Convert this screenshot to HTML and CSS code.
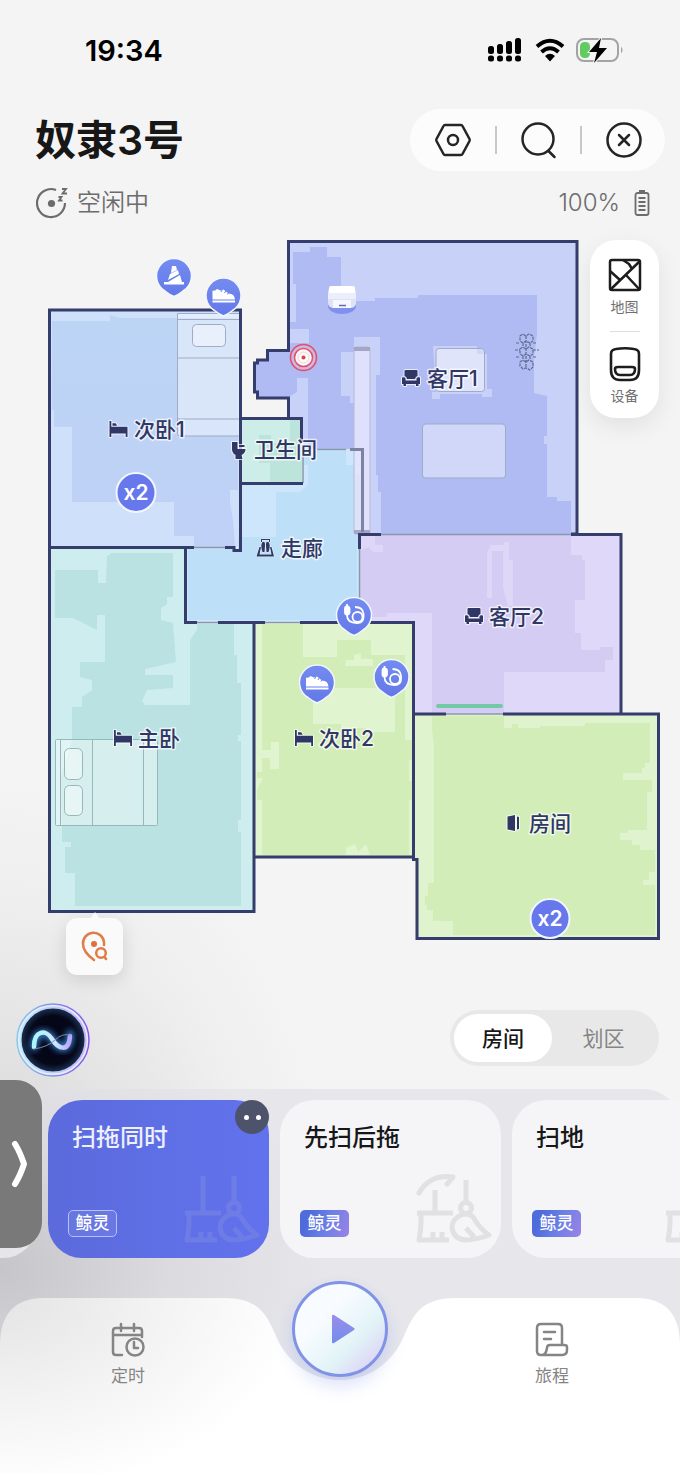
FILE: index.html
```html
<!DOCTYPE html>
<html lang="zh-CN">
<head>
<meta charset="utf-8">
<meta name="viewport" content="width=device-width, initial-scale=1">
<title>奴隶3号</title>
<link rel="stylesheet" href="styles.css">
</head>
<body>
<div class="app">
  <div class="statusbar">
    <span class="clock">19:34</span>
    <div class="signals">
      <svg width="36" height="26" viewBox="0 0 36 26" aria-hidden="true">
        <g fill="#000"><rect x="1" y="9" width="6" height="8" rx="2.5"/><rect x="10" y="7" width="6" height="10" rx="2.5"/><rect x="19" y="4" width="6" height="13" rx="2.5"/><rect x="28" y="1" width="6" height="16" rx="2.5"/><rect x="1" y="18.500" width="6" height="6" rx="2.500"/><rect x="10" y="18.500" width="6" height="6" rx="2.500"/><rect x="19" y="18.500" width="6" height="6" rx="2.500"/><rect x="28" y="18.500" width="6" height="6" rx="2.500"/></g>
      </svg>
      <svg width="30" height="24" viewBox="0 0 30 24" aria-hidden="true">
        <g fill="none" stroke="#000" stroke-width="4"><path d="M2 8.500Q15-3 28 8.500"/><path d="M6.500 14Q15 6.500 23.500 14"/></g><path d="M10 18q5-4.500 10 0l-5 5.500z"/>
      </svg>
      <svg width="48" height="26" viewBox="0 0 48 26" aria-hidden="true">
        <rect x="1" y="2" width="41" height="22" rx="7" fill="none" stroke="#a3a3a3" stroke-width="2"/>
        <rect x="4" y="5" width="10" height="16" rx="4.500" fill="#61cb62"/>
        <path d="M45 9.500q3 3.500 0 7z" fill="#a3a3a3"/>
        <path d="M25 1L13 15h8l-3 11 13-15h-8z" stroke="#f4f4f4" stroke-width="2" paint-order="stroke"/>
      </svg>
    </div>
  </div>

  <header class="header">
    <h1 class="title">奴隶3号</h1>
    <div class="capsule">
      <button class="icon-btn" aria-label="设置"><svg width="38" height="38" viewBox="0 0 38 38"><path d="M11 4h16q1 0 1.500 1l7 13q.5 1 0 2l-7 13q-.5 1-1.500 1H11q-1 0-1.500-1l-7-13q-.5-1 0-2l7-13q.5-1 1.500-1z"/><circle cx="19" cy="19" r="5"/></svg></button>
      <span class="bar"></span>
      <button class="icon-btn" aria-label="搜索"><svg width="38" height="38" viewBox="0 0 38 38"><circle cx="18" cy="18" r="15.500"/><path d="M28.500 30l6 6"/></svg></button>
      <span class="bar"></span>
      <button class="icon-btn" aria-label="关闭"><svg width="38" height="38" viewBox="0 0 38 38"><circle cx="19" cy="19" r="16.500"/><path d="M14 14l10 10M24 14l-10 10"/></svg></button>
    </div>
  </header>

  <div class="state">
    <span class="state-item">
      <svg width="32" height="32" viewBox="0 0 32 32" fill="none" stroke="#6c6c6c" stroke-width="2.200" aria-hidden="true"><path d="M20 3A14 14 0 1 0 29 16"/><circle cx="15.500" cy="16.500" r="3.600" fill="#6c6c6c" stroke="none"/><path d="M26 2h4l-3.500 4.500H31M22.500 10h3l-2.500 3.500h3.500" stroke-width="1.800"/></svg>
      空闲中
    </span>
    <span class="state-item battery">
      100%
      <svg width="16" height="28" viewBox="0 0 16 28" fill="none" stroke="#6c6c6c" stroke-width="1.800" aria-hidden="true"><rect x="1.500" y="4" width="13" height="22" rx="2"/><path d="M5 2h6M4.500 9h7M4.500 13h7M4.500 17h7M4.500 21h7"/></svg>
    </span>
  </div>

  <main class="map">
    <svg class="plan" viewBox="0 230 680 750" role="img" aria-label="房间地图">
      <defs>
        <linearGradient id="pinFill" x1="0" y1="0" x2="0" y2="1"><stop offset="0" stop-color="#748cf0"/><stop offset="1" stop-color="#6378e8"/></linearGradient>
        <linearGradient id="bedroomFill" x1="0" y1="0" x2="0" y2="1"><stop offset="0" stop-color="#bcd5f5"/><stop offset="1" stop-color="#bfd0f6"/></linearGradient>
        <path id="pin" d="M0 20.500Q-4 19-9 15A17.500 17.500 0 1 1 9 15Q4 19 0 20.500z"/>
        <path id="bed" d="M0 0h1.800v5.800H18V16h-1.800v-3.500H1.800V16H0zM3 2.200h3.200l1.500 2.600H3z"/>
        <path id="sofa" d="M3.500 0h11q1 0 1 1v5q-2 .5-2.500 3H5Q4.500 6.500 2.500 6V1q0-1 1-1zM0 7.500q3-1 3.500 1V10.500h11V8.500q.5-2 3.500-1V14h-1.500v2H14v-2H4v2H1.500v-2H0z"/>
        <g id="shoe"><path fill="#fff" d="M-11-5q2.500 1 4.500-1.500L-3-5l3-1 5 4q6 0 6.500 6H-11zM-11 5h22.500v2H-11z"/><path d="M-1-6l-1.500 2.500M2.500-5l-1.500 2.500M5.500-3.500l-1.500 2.500" stroke="#6d85ee" stroke-width="1"/></g>
        <g id="cable" fill="none" stroke="#fff" stroke-width="1.800"><rect x="-9" y="-8.500" width="4.500" height="8" rx="2" fill="#fff"/><path d="M-7-11v3M-7 0Q-7 8 3 8 9.500 8 9.500 2V-1Q9-8 1-8"/><circle cx="3.500" cy="2" r="5"/></g>
      </defs>

      <g class="floor">
        <path fill="#cfe0fb" d="M50 310H240V547H50z"/>
        <path fill="url(#bedroomFill)" d="M52 321H110V315L120 318H238V490H230V502L233 520 235 547H194V536H174V502H72V427H54V410H52z"/>
        <path fill="#c8d1f7" d="M288 242H577V534H363V449H303V418H288V398H257V392H254V363H257V360H267V350H288z"/>
        <path fill="#b0bbf4" d="M293 252H310V247H327V257H341V301H375V298H418V295H537V335L534 357V393L547 396V436H544V444H547V497H557V501H571V534H381V492H378V475H376V375H380V337H354V352H341V396H350V403H354V449H308V378H297V392L289 397H257V392H254V363H257V360H267V350H289V343H309V329H289V322H296V284H293z"/>
        <path fill="#cdeee8" d="M241 419H302V483H241z"/>
        <path fill="#bce4db" d="M290 419h12v64h-32v-20h-11v-28h12v8h19z"/>
        <path fill="#cee6fc" d="M241 483H303V449H363V534H359V622H186V548H241z"/>
        <path fill="#bedff8" d="M276 492H300L308 484V465H303V451H346V465H354V475H361V534L357 547V620H188V549H238V537H276z"/>
        <path fill="#dfd8f8" d="M359 534H621V714H414V622H359z"/>
        <path fill="#d4ccf2" d="M360 535H571V555H582V560H585V600H575V633H581V650H600V647H613V660H605V672H504V713H432V613H387V617H360z"/>
        <path fill="#ded7f7" d="M487 553l4-8h13v-3h5v18h4v46h-5l-5-18v-37h-11v47h-5zM361 536h14v9h8v7h-10l-4-5-8 3z"/>
        <path fill="#ceedef" d="M50 548H186V622H254V911H50z"/>
        <path fill="#bae2e2" d="M107 555H110V553H173V597H167V604L161 608V620L173 623 176 662 145 669V675H173V688L147 690 142 701 145 705H190V640L197 630V624H234V655H237V683H241V735H238V741H241V820H238V832H241V906H75V873H65V847H71V842H62V826L60 780 72 740V707H82V697L92 690V680L80 677V662H105V615H97V630L73 618H55V570H98V583H106z"/>
        <path fill="#e0f4cf" d="M254 622H414V857H254z"/>
        <path fill="#d2edb8" d="M262 624H303V657H337V640H371V655H405V740H412V760H409V781H412V800H409V855H262V800H257V790L263 778H257V772H262z"/>
        <path fill="#dff4cf" d="M313 688H395V732H366V728H341V724H313zM271 742h8v27h-9v-11h-8v-8h9zM346 660h8v-5l7-2v6h12v7h-28zM346 855v-7l9-4 3 8 8-8 4 11z"/>
        <path fill="#dff3cf" d="M414 714H658V939H417V859H414z"/>
        <path fill="#d2edb8" d="M432 716H504V728H512V724H518V728H540V726H585V723H650V763H645V768H642V773H623V780H652V792H647V830H628V833H620V840H632V845H640V850H655V872H649V880H643V885H655V935H453V921H433V910H427V905H425V896H428V883H434V747L432 730z"/>
      </g>

      <g class="furniture">
        <path d="M177.500 313.500H240V436H180q-2.500 0-2.500-2.500z"/><path d="M178 319.500H240M178 358H240M178 419H240"/><rect x="192.500" y="324.500" width="33" height="22" rx="4"/>
        <g class="teal"><rect x="55.500" y="739.500" width="102" height="86" rx="1"/><path d="M60.500 740v85M92.500 740v85M143.500 740v85"/><rect x="64.500" y="748.500" width="18" height="31" rx="5"/><rect x="64.500" y="785.500" width="18" height="30" rx="5"/></g>
        <path class="halo" d="M433 346h44v8h10v35h5v8h-10v-3h-42v5h-8v-7h4z"/>
        <rect x="436" y="348.500" width="48.500" height="43" rx="3"/><rect x="422.500" y="424" width="83" height="54" rx="3"/>
      </g>

      <g class="door"><path d="M194 547.500H225M317 449.500H346M303 449V483M197 622.500H218M265 622.500H300M446 714H503M381 534.500H571M359.500 549V620"/></g>
      <g class="cabinet"><rect x="354" y="347" width="16" height="187" rx="2"/><path d="M354 347h16v4h-16z"/><path d="M354 530h16v4h-16z"/></g>
      <g class="wall">
        <path d="M194 547.500H49.500V310H240.500V550.500H234V547.500H225"/>
        <path d="M288.500 418V398H257.500V392H254.500V363H257.500V360H267.500V350.500H288.500V241.500H577V534H571"/>
        <path d="M240 418.500H301.500V442M240 483.500H303"/>
        <path class="soft" d="M350 449.500H362.500V532"/>
        <path d="M381 534.500H359.500V549M571 534.500H621V714"/>
        <path d="M185.500 547.500V622.500H197M218 622.500H265M300 622.500H413.500V859.500H417V938.500H658.500V714H503M446 714H415M254 622.500V911.500H49.500V547M254 857H414"/>
      </g>
      <path d="M438 706H501" stroke="#73c9a6" stroke-width="4" stroke-linecap="round"/>

      <g fill="none" stroke="#626a8c" stroke-width="1.200" stroke-dasharray="3 1">
        <path d="M520 336l3-2 3 2 3-2 4 2v5l-3 2-4-2-3 2-3-2zM520 349l3-2 3 2 3-2 4 2v5l-3 2-4-2-3 2-3-2zM520 362l3-2 3 2 3-2 4 2v5l-3 3-4-2-3 1-3-3zM523 343v4M530 343v4M523 356v4M530 356v4M526 336v32M516 343h4M533 343h4M515 350h5M533 350h6M516 357h4M533 357h3"/>
      </g>

      <g class="robot"><ellipse cx="342" cy="306" rx="14" ry="8" fill="#7f91ed"/><rect x="328" y="287" width="28" height="21" rx="5" fill="#dfe1f5"/><path d="M331 286h22q2 0 2 2v5h-26v-5q0-2 2-2z" fill="#fff"/><path d="M328 293h28v6h-28z" fill="#eceefd"/><path d="M333 300h18v8h-18z" fill="#f7f8ff"/><path d="M339 305.500h7" stroke="#5c6db2" stroke-width="1.500"/></g>
      <g><circle cx="303.500" cy="357.500" r="13" fill="#dcb3dc" fill-opacity=".75" stroke="#df526b" stroke-width="1.600"/><circle cx="303.500" cy="357.500" r="9" fill="#fffaf9" stroke="#df526b" stroke-width="1.500"/><circle cx="303.500" cy="357.500" r="5.500" fill="none" stroke="#e9d5cc"/><circle cx="303.500" cy="357.500" r="2" fill="#dc3e59"/></g>

      <g class="tags">
        <use href="#bed" x="109.500" y="421"/><text x="134" y="437">次卧1</text>
        <path d="M232 442h5.500v7h8q0 4-4 6l1 4h-7v-4q-3.500-2-3.500-6zM239 445h5.500v2H239z"/><text x="254" y="457">卫生间</text>
        <g class="fine"><path d="M259.500 547h1.500l-1.500 7.500h12l-1.500-7.500h1.500l2.500 9.500h-17.500zM261 542v-3h9v3h-1v-2h-7v2z"/><path d="M262.500 542q3-1 2.500 4l-.5 6h-2q-2.500-7 0-10zM268.500 542q-3-1-2.500 4l.5 6h2q2.500-7 0-10z"/></g><text x="281" y="556">走廊</text>
        <use href="#sofa" x="402" y="370"/><text x="427" y="386">客厅1</text>
        <use href="#sofa" x="465" y="608"/><text x="489" y="624">客厅2</text>
        <use href="#bed" x="114" y="730"/><text x="138" y="746">主卧</text>
        <use href="#bed" x="295" y="730"/><text x="319" y="746">次卧2</text>
        <path d="M507.500 816.500l7.500-1.500v16l-7.500-1.500zM517 816.500l2 .5v12l-2 .5z"/><text x="529" y="831">房间</text>
      </g>

      <g class="counts">
        <circle cx="136" cy="492.500" r="19.500"/><text x="136" y="500">x2</text>
        <circle cx="550" cy="918.500" r="19.500"/><text x="550" y="926">x2</text>
      </g>
      <g class="pins">
        <g transform="translate(174 276)"><use href="#pin"/><path d="M-2-10h4l1 4-6 3zM-4-2l8-4 1 4-11 6zM-6 6l12-7 2 7h2v2.500h-20V6h3z" fill="#fff"/></g>
        <g transform="translate(223.500 295.500)"><use href="#pin"/><use href="#shoe"/></g>
        <g transform="translate(354 615)"><use href="#pin"/><use href="#cable"/></g>
        <g transform="translate(317 682.500)"><use href="#pin"/><use href="#shoe"/></g>
        <g transform="translate(391.500 677)"><use href="#pin"/><use href="#cable"/></g>
      </g>
    </svg>

    <div class="tools">
      <button class="tool"><svg width="36" height="36" viewBox="0 0 36 36" fill="none" stroke="#1d1d1d" stroke-width="2.500" stroke-linejoin="round"><rect x="3" y="3" width="30" height="30" rx="2"/><path d="M33 4L3 33M3 14l10 9M16 3l6 4 3 5M19 18l14 15"/></svg>地图</button>
      <span class="tools-line"></span>
      <button class="tool"><svg width="36" height="36" viewBox="0 0 36 36" fill="none" stroke="#1d1d1d" stroke-width="2.600" stroke-linejoin="round"><path d="M9 3Q18 1.500 27 3q5 .5 5 5v16q0 10-9 10H13Q4 34 4 24V8q0-4.500 5-5z"/><path d="M11 21h14q3 0 3 2 0 6-5 6H13q-5 0-5-6 0-2 3-2z"/></svg>设备</button>
    </div>
    <button class="locate" aria-label="定位"><svg width="32" height="32" viewBox="0 0 32 32" fill="none" stroke="#df7c47" stroke-width="2.500" stroke-linecap="round"><path d="M15 29Q4 21 4 13a10.500 10.500 0 0 1 21-1.500V14"/><circle cx="15" cy="13" r="3" fill="#df7040" stroke="none"/><circle cx="22" cy="22" r="4.800"/><path d="M25.500 26l1.500 2"/></svg></button>
  </main>

  <div class="mode-row">
    <button class="assistant" aria-label="助手">
      <svg width="74" height="74" viewBox="0 0 74 74">
        <defs><linearGradient id="ring"><stop offset="0" stop-color="#83ccec"/><stop offset="1" stop-color="#8656e9"/></linearGradient><radialGradient id="orb"><stop offset="0" stop-color="#030313"/><stop offset=".75" stop-color="#060719"/><stop offset="1" stop-color="#1b3556"/></radialGradient><linearGradient id="halo"><stop offset="0" stop-color="#bde6f6"/><stop offset="1" stop-color="#c5b5f6"/></linearGradient><linearGradient id="loop"><stop offset="0" stop-color="#aef6fa"/><stop offset=".6" stop-color="#cfe6ff"/><stop offset="1" stop-color="#b9a6fa"/></linearGradient><filter id="glow" x="-50%" y="-50%" width="200%" height="200%"><feGaussianBlur stdDeviation="3"/></filter></defs>
        <circle cx="37" cy="37" r="36" fill="#e8ebfb" stroke="url(#ring)" stroke-width="1.500"/><circle cx="37" cy="37" r="32.500" fill="url(#orb)" stroke="url(#halo)" stroke-width="2"/>
        <g fill="none" stroke-linecap="round"><path d="M18 44C18 27 32 27 37 37 43 49 55 47 54 31" stroke="#3a8fe0" stroke-width="7" filter="url(#glow)"/><path d="M18 44C18 27 30 26 36 36S53 50 54 33" stroke="url(#loop)" stroke-width="4.500"/><path d="M18 46Q32 44 39 37T54 32" stroke="#7b8ba8" stroke-width="1"/></g>
      </svg>
    </button>
    <div class="segmented" role="tablist">
      <button class="segment active" role="tab" aria-selected="true">房间</button>
      <button class="segment" role="tab" aria-selected="false">划区</button>
    </div>
  </div>

  <section class="panel">
    <svg width="0" height="0" class="sprites" aria-hidden="true">
      <symbol id="broom" viewBox="0 0 76 76"><g fill="none" stroke="currentColor" stroke-width="5" stroke-linejoin="round"><path d="M19 18v23M1 41h36M5 43v7q0 8-2 18h30M17 68v-8M26 68v-8M50 8v23"/><circle cx="50" cy="36" r="5.500"/><path d="M45 43Q36 47 36 56 38 68 51 68 63 67 73 63 64 57 57 45 52 40 45 43zM50 56l8 9"/></g></symbol>
    </svg>
    <div class="cards">
      <button class="card past" aria-label="上一模式"></button>
      <button class="card selected">
        <span class="card-title">扫拖同时</span><span class="badge">鲸灵</span>
        <svg class="art" viewBox="0 0 76 76"><use href="#broom"/><path d="M19 4v14M50 4v4" stroke="currentColor" stroke-width="5"/></svg>
        <span class="more"><i></i><i></i></span>
      </button>
      <button class="card">
        <span class="card-title">先扫后拖</span><span class="badge">鲸灵</span>
        <svg class="art" viewBox="0 0 76 76"><use href="#broom"/><path d="M3 21Q14 2 37 5l-6 7" fill="none" stroke="currentColor" stroke-width="5" stroke-linecap="round" stroke-linejoin="round"/></svg>
      </button>
      <button class="card">
        <span class="card-title">扫地</span><span class="badge">鲸灵</span>
        <svg class="art single" viewBox="0 0 76 76"><use href="#broom"/></svg>
      </button>
    </div>

    <nav class="nav">
      <svg class="nav-shape" viewBox="0 0 680 176" preserveAspectRatio="none" aria-hidden="true">
        <defs><radialGradient id="navFill" gradientUnits="userSpaceOnUse" cx="0" cy="0" r="300" gradientTransform="scale(1 .65)"><stop offset="0" stop-color="#e4e4e4"/><stop offset=".5" stop-color="#f2f2f2"/><stop offset="1" stop-color="#fff"/></radialGradient></defs>
        <path fill="url(#navFill)" d="M0 48Q0 0 44 0H224C260 0 267 18 276 38 285 60 307 82 340 82S395 60 404 38C413 18 420 0 456 0H636Q680 0 680 48V176H0z"/>
      </svg>
      <button class="nav-item"><svg width="36" height="36" viewBox="0 0 36 36"><path d="M12 33H6q-3 0-3-3V9q0-3 3-3h23q3 0 3 3v6M3 13h29M11 2v7M24 2v7"/><circle cx="25" cy="25" r="8.500"/><path d="M24 20v6h4"/></svg>定时</button>
      <button class="play" aria-label="开始"><svg width="26" height="32" viewBox="0 0 26 32"><defs><linearGradient id="playFill" x1="0" y1="0" x2="0" y2="1"><stop offset="0" stop-color="#9a8ee9"/><stop offset="1" stop-color="#738ceb"/></linearGradient></defs><path d="M2 3q0-2 2-1l20 13q1.500 1 0 2L4 30q-2 1-2-1z" fill="url(#playFill)"/></svg></button>
      <button class="nav-item"><svg width="36" height="36" viewBox="0 0 36 36"><path d="M28 23V6q0-4-4-4H7Q3 2 3 6v23q0 4 4 4h21q5 0 5-5v-3q0-2-3-2H16q-3 0-3 3-1 7-5 7M10 10h11M10 17h7"/></svg>旅程</button>
    </nav>
    <button class="drawer" aria-label="展开"><svg width="20" height="50" viewBox="0 0 20 50" fill="none" stroke="#fff" stroke-width="6" stroke-linecap="round" stroke-linejoin="round"><path d="M4 5q5 8 9 20-4 12-9 20"/></svg></button>
  </section>
</div>
</body>
</html>
```
FILE: styles.css
```css
* { box-sizing: border-box; }
body {
  margin: 0;
  background: #f4f4f4;
  font-family: Inter, "Noto Sans CJK SC", sans-serif;
  color: #171717;
}
button {
  margin: 0;
  padding: 0;
  border: 0;
  background: none;
  color: inherit;
  font: inherit;
  cursor: pointer;
}
svg { display: block; }
.app {
  position: relative;
  display: flex;
  flex-direction: column;
  min-height: 100vh;
  overflow: hidden;
  background: radial-gradient(ellipse 340px 480px at 0 1250px, #cfcfd1 0%, #e4e4e5 45%, #efefef 75%, #f4f4f4 100%);
}

.statusbar {
  display: flex;
  align-items: center;
  justify-content: space-between;
  height: 100px;
  padding: 0 56px 0 85px;
}
.clock { color: #000; font-size: 29px; font-weight: 600; }
.signals { display: flex; align-items: center; gap: 12px; }
.signals svg:last-child { margin-left: -1px; }

.header {
  display: flex;
  align-items: center;
  justify-content: space-between;
  height: 80px;
  padding: 0 15px 0 35px;
}
.title { margin: 0; font-size: 41px; font-weight: 600; line-height: 60px; }
.capsule {
  display: flex;
  align-items: center;
  justify-content: space-between;
  width: 255px;
  height: 62px;
  padding: 0 22px 0 24px;
  border-radius: 31px;
  background: #fcfcfc;
}
.icon-btn svg { fill: none; stroke: #252525; stroke-width: 2.5; stroke-linecap: round; }
.bar { width: 2px; height: 28px; background: #c8c8c8; }

.state {
  display: flex;
  align-items: center;
  justify-content: space-between;
  height: 50px;
  padding: 0 30px 4px 36px;
  color: #6c6c6c;
  font-size: 24px;
  line-height: 36px;
}
.state-item { display: flex; align-items: center; gap: 9px; font-weight: 350; }
.battery { gap: 14px; }

.map { position: relative; }
.plan { width: 100%; height: auto; }
.wall path { fill: none; stroke: #343d6b; stroke-width: 3; }
.wall .soft { stroke: #7f83a3; }
.door path { fill: none; stroke: #8798ad; stroke-width: 1.5; }
.furniture path, .furniture rect { fill: #fff; fill-opacity: .42; stroke: #9fabc7; stroke-width: 1; }
.furniture .teal path, .furniture .teal rect { stroke: #94b9ba; }
.furniture .halo { fill: #c8d1f7; fill-opacity: 1; stroke: none; }
.cabinet rect { fill: #e3e3fc; fill-opacity: .85; stroke: #b7b9d4; stroke-width: 1; }
.cabinet path { fill: #a3a6c6; }
.tags { fill: #303764; stroke: #fff; stroke-opacity: .7; stroke-width: 2; stroke-linejoin: round; paint-order: stroke; }
.tags .fine { stroke-width: 1; }
.tags text { font-size: 21px; font-weight: 500; stroke-width: 3; }
.counts circle { fill: #6678eb; stroke: #f2f6ff; stroke-width: 2; }
.counts text { fill: #fff; font-size: 21px; font-weight: 600; text-anchor: middle; }
.pins > g > use:first-child { fill: url(#pinFill); stroke: #f3f6ff; stroke-width: 1.5; }

.tools {
  position: absolute;
  top: 10px;
  right: 21px;
  display: flex;
  flex-direction: column;
  align-items: center;
  justify-content: space-between;
  width: 69px;
  height: 178px;
  padding: 17px 0 12px;
  border-radius: 26px;
  background: #fff;
  box-shadow: 0 8px 24px rgba(0, 0, 0, .08);
}
.tool { display: flex; flex-direction: column; align-items: center; gap: 4px; color: #707070; font-size: 14px; line-height: 20px; }
.tools-line { width: 30px; height: 1px; background: #dedede; }
.locate {
  position: absolute;
  top: 688px;
  left: 66px;
  display: grid;
  place-items: center;
  width: 57px;
  height: 57px;
  border-radius: 11px;
  background: #fafafa;
  box-shadow: 0 5px 18px rgba(0, 0, 0, .12);
}
.locate::before {
  content: "";
  position: absolute;
  top: -6px;
  border: 5px solid transparent;
  border-top: 0;
  border-bottom: 7px solid #fafafa;
}

.mode-row {
  display: flex;
  align-items: center;
  justify-content: space-between;
  height: 109px;
  padding: 6px 21px 0 16px;
}
.assistant { padding-top: 4px; }
.segmented { display: flex; width: 209px; height: 56px; padding: 4px; border-radius: 28px; background: #e8e8e8; }
.segment { flex: 1; padding-bottom: 2px; border-radius: 24px; color: #858585; font-size: 21px; }
.segment.active { flex: 0 0 98px; background: #fff; color: #171717; font-weight: 500; }

.panel {
  position: relative;
  display: flex;
  flex: 1;
  flex-direction: column;
  border-top-right-radius: 36px;
  background: radial-gradient(ellipse 330px 250px at 0 180px, #c6c6ca 0%, #dbdbdf 50%, #e7e7eb 100%);
}
.sprites { position: absolute; }
.cards { display: flex; gap: 11px; padding: 11px 0 0; overflow: hidden; }
.card {
  position: relative;
  display: flex;
  flex: 0 0 221px;
  flex-direction: column;
  align-items: flex-start;
  justify-content: space-between;
  height: 158px;
  padding: 20px 20px 21px;
  border-radius: 34px;
  background: #f5f5f7;
}
.card.past { margin-left: -184px; background: #e6e6e8; }
.card.selected { background: linear-gradient(90deg, #5b6bdc, #6272ed); color: #edf0ff; }
.card-title { padding-left: 4px; font-size: 24px; font-weight: 500; line-height: 36px; }
.badge {
  width: 49px;
  height: 27px;
  border-radius: 5px;
  background: linear-gradient(110deg, #506cdc 20%, #6c80e5 55%, #9b83e5);
  color: #fff;
  font-size: 17px;
  font-weight: 500;
  line-height: 27px;
  text-align: center;
}
.selected .badge { border: 1px solid #b5bff8; background: rgba(255, 255, 255, .08); line-height: 25px; }
.art { position: absolute; right: 9px; bottom: 10px; width: 76px; height: 76px; color: #e1e1e3; }
.selected .art { color: #6e7de6; }
.art.single { right: -8px; }
.more {
  position: absolute;
  top: 0;
  right: 0;
  display: flex;
  align-items: center;
  justify-content: center;
  gap: 7px;
  width: 34px;
  height: 34px;
  border-radius: 50%;
  background: #4c536b;
}
.more i { width: 5px; height: 5px; border-radius: 50%; background: #fff; }

.nav {
  position: relative;
  display: grid;
  flex: 1;
  grid-template-columns: 1fr 168px 1fr;
  justify-items: center;
  align-items: start;
  min-height: 176px;
  margin-top: 40px;
}
.nav-shape { position: absolute; inset: 0; width: 100%; height: 100%; }
.nav-item {
  position: relative;
  display: flex;
  flex-direction: column;
  align-items: center;
  gap: 6px;
  padding-top: 24px;
  color: #858585;
  font-size: 17px;
  line-height: 24px;
}
.nav-item svg { fill: none; stroke: #858585; stroke-width: 2.5; stroke-linecap: round; stroke-linejoin: round; }
.play {
  position: relative;
  display: grid;
  place-items: center;
  width: 96px;
  height: 96px;
  margin-top: -17px;
  padding-left: 6px;
  border: 3px solid #8093e6;
  border-radius: 50%;
  background: linear-gradient(135deg, #f8fbff 35%, #e2f4f7 65%, #ded9f7 85%, #eceffc);
  box-shadow: 0 8px 18px rgba(105, 130, 235, .25);
}
.drawer {
  position: absolute;
  top: -9px;
  left: 0;
  display: grid;
  place-items: center;
  width: 42px;
  height: 168px;
  border-radius: 0 26px 26px 0;
  background: #797979;
}
```
